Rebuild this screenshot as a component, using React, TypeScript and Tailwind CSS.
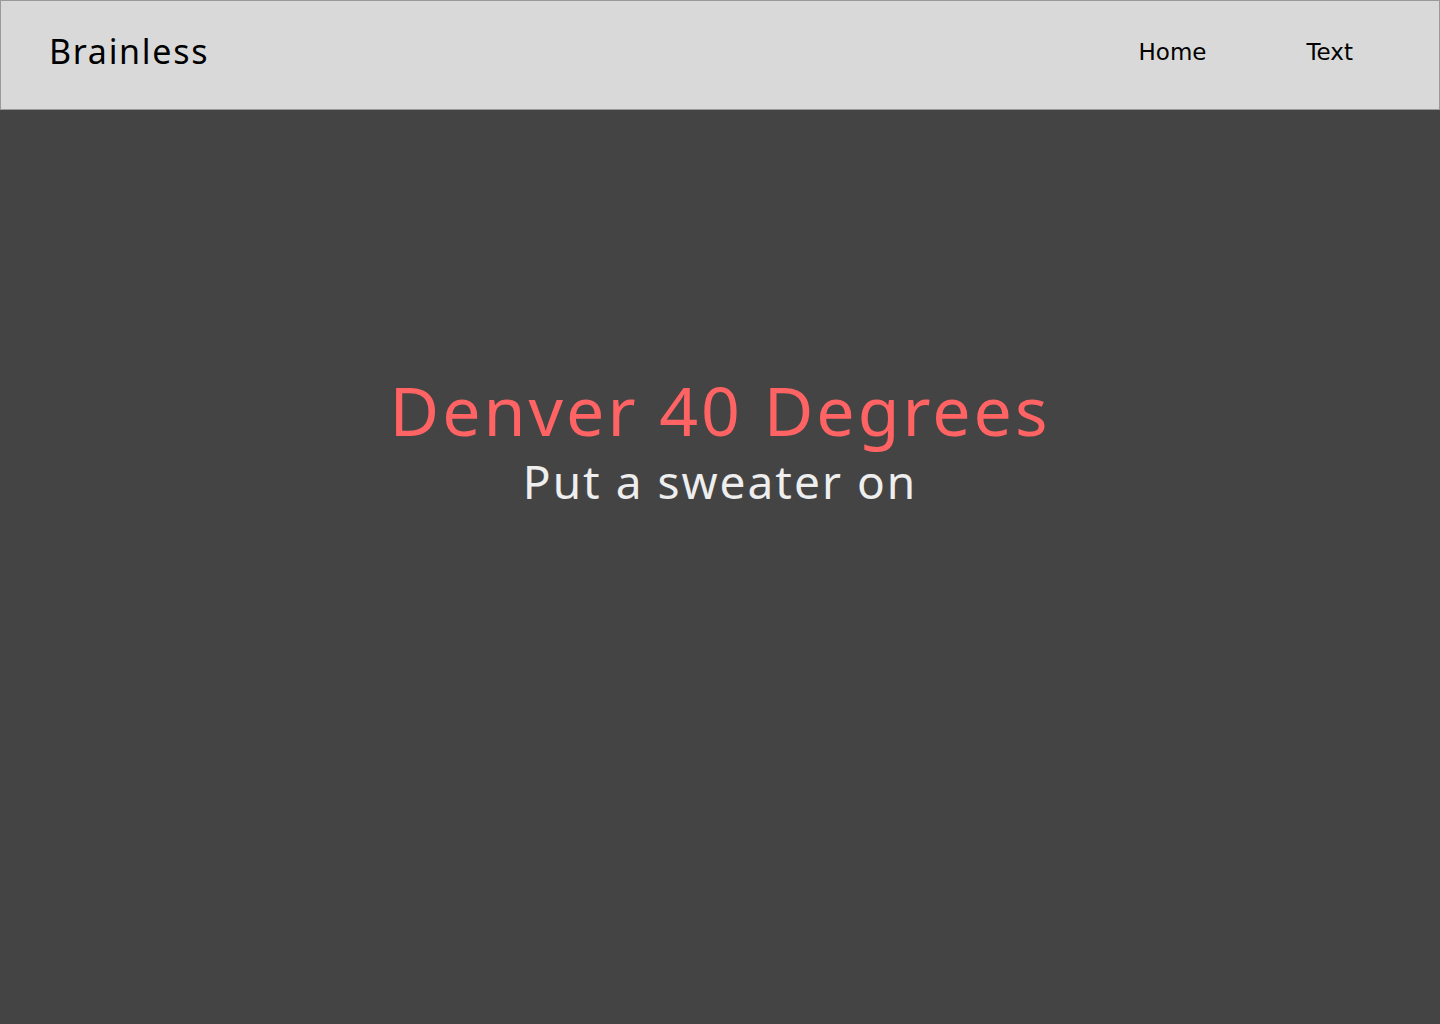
export default function App() {
  return (
    <div className="w-[1440px] h-[1024px] bg-[#444444] flex flex-col">
      <header className="h-[110px] bg-[#d9d9d9] border border-[#999999] flex items-center justify-between pl-[48px] pr-[86px]">
        <div className="text-[34px] tracking-[1.7px] text-black leading-none mt-[-8px]" style={{ fontFamily: '"Noto Sans", sans-serif' }}>
          Brainless
        </div>
        <nav className="flex items-center gap-[100px] text-[23px] leading-none text-black mt-[-5px]" style={{ fontFamily: '"DejaVu Sans", sans-serif' }}>
          <span>Home</span>
          <span>Text</span>
        </nav>
      </header>
      <main className="flex flex-col items-center pt-[262px]" style={{ fontFamily: '"Noto Sans", sans-serif' }}>
        <h1 className="text-[68px] tracking-[3px] leading-[76px] text-[#ff6363]">Denver 40 Degrees</h1>
        <p className="text-[46px] tracking-[2px] leading-[56px] mt-[5px] text-[#eeeeee]">Put a sweater on</p>
      </main>
    </div>
  );
}
